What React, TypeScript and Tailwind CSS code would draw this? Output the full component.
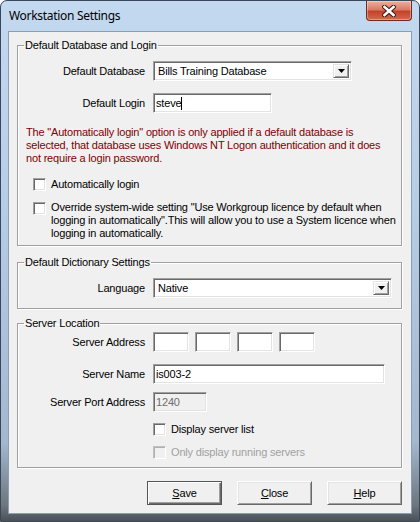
import React from 'react'

const ui = "font-['Liberation_Sans',Arial,sans-serif] text-[11px] leading-[13px] tracking-[-0.18px] text-black"
const sunken = "border border-t-[#a0a0a0] border-l-[#a0a0a0] border-b-white border-r-white shadow-[inset_1px_1px_0_#696969,inset_-1px_-1px_0_#e3e3e3]"

function Combo({ value, width }: { value: string; width: string }) {
    return (
        <div className={`${sunken} ${width} h-[20px] bg-white flex items-stretch p-[2px]`}>
            <span className="flex-1 pl-[2px] flex items-center">{value}</span>
            <span className="w-[16px] bg-[#f0f0f0] flex items-center justify-center border border-t-[#e3e3e3] border-l-[#e3e3e3] border-b-[#696969] border-r-[#696969] shadow-[inset_1px_1px_0_white,inset_-1px_-1px_0_#a0a0a0]">
                <svg width="7" height="4" viewBox="0 0 7 4">
                    <path d="M0 0h7L3.5 4z" fill="#000" />
                </svg>
            </span>
        </div>
    )
}

function TextBox({ value, width, disabled, caret }: { value?: string; width: string; disabled?: boolean; caret?: boolean }) {
    return (
        <div className={`${sunken} ${width} h-[20px] flex items-center pl-[2px] ${disabled ? 'bg-[#f0f0f0] text-[#6d6d6d]' : 'bg-white'}`}>
            <span>{value}</span>
            {caret && <span className="w-[1px] h-[13px] bg-black" />}
        </div>
    )
}

function Check({ disabled }: { disabled?: boolean }) {
    return (
        <span
            className={`block shrink-0 w-[13px] h-[13px] border ${disabled
                ? 'bg-[#f0f0f0] border-t-[#c0c0c0] border-l-[#c0c0c0] border-b-white border-r-white shadow-[inset_1px_1px_0_#b0b0b0]'
                : 'bg-white border-t-[#a0a0a0] border-l-[#a0a0a0] border-b-white border-r-white shadow-[inset_1px_1px_0_#696969,inset_-1px_-1px_0_#e3e3e3]'
                }`}
        />
    )
}

function Row({ label, children, className = '' }: { label: string; children: React.ReactNode; className?: string }) {
    return (
        <div className={`flex items-center gap-[8px] ${className}`}>
            <span className="w-[127px] text-right">{label}</span>
            {children}
        </div>
    )
}

function Group({ title, children, className = '' }: { title: string; children: React.ReactNode; className?: string }) {
    return (
        <fieldset className={`w-[385px] border border-[#a0a0a0] shadow-[inset_1px_1px_0_white,1px_1px_0_white] flex flex-col ${className}`}>
            <legend className="ml-[6px] px-[1px] leading-[13px]">{title}</legend>
            {children}
        </fieldset>
    )
}

function Button({ children, isDefault }: { children: React.ReactNode; isDefault?: boolean }) {
    return (
        <button
            className={`w-[75px] h-[24px] bg-[#f0f0f0] border ${isDefault
                ? 'border-[#555] shadow-[inset_1px_1px_0_white,inset_-1px_-1px_0_#696969,inset_-2px_-2px_0_#a0a0a0]'
                : 'border-t-white border-l-white border-b-[#696969] border-r-[#696969] shadow-[inset_1px_1px_0_#e3e3e3,inset_-1px_-1px_0_#a0a0a0]'
                }`}
        >
            {children}
        </button>
    )
}

export default function App() {
    return (
        <div className={`${ui} w-[420px] h-[522px] flex flex-col rounded-t-[7px] border border-[#39475a] bg-[linear-gradient(to_bottom,#c3d9f0_0%,#b6cde6_40%,#a2b8cf_85%,#6e757d_97%,#4c5158_100%)]`}>
            <div className="h-[30px] flex justify-between items-start">
                <span className="pl-[8px] pt-[8px] font-['Noto_Sans',sans-serif] text-[12px] leading-[14px] tracking-[-0.3px] text-black">
                    Workstation Settings
                </span>
                <div className="mr-[7px] w-[46px] h-[20px] rounded-b-[4px] border border-t-0 border-[#6e2a1e] bg-[linear-gradient(to_bottom,#eab0a2_0%,#db7b65_45%,#c4432a_55%,#d16a52_100%)] shadow-[inset_0_0_0_1px_rgba(255,255,255,0.35)] flex items-center justify-center">
                    <svg width="14" height="12" viewBox="0 0 14 12">
                        <path d="M2.5 2l9 8M11.5 2l-9 8" stroke="#3b1a14" strokeWidth="4.6" strokeLinecap="square" />
                        <path d="M2.5 2l9 8M11.5 2l-9 8" stroke="#fff" strokeWidth="2.6" strokeLinecap="square" />
                    </svg>
                </div>
            </div>

            <div className="mx-[7px] mb-[7px] flex-1 border border-[#8a9fb5] bg-[#f0f0f0] flex flex-col pl-[8px] pt-[7px]">
                <Group title="Default Database and Login" className="pb-[5px]">
                    <Row label="Default Database" className="mt-[9px]">
                        <Combo value="Bills Training Database" width="w-[199px]" />
                    </Row>
                    <Row label="Default Login" className="mt-[12px]">
                        <TextBox value="steve" width="w-[119px]" caret />
                    </Row>
                    <p className="mt-[13px] ml-[8px] text-[#800000] whitespace-nowrap">
                        The "Automatically login" option is only applied if a default database is<br />
                        selected, that database uses Windows NT Logon authentication and it does<br />
                        not require a login password.
                    </p>
                    <label className="mt-[13px] ml-[15px] flex items-center gap-[5px]">
                        <Check />
                        <span>Automatically login</span>
                    </label>
                    <label className="mt-[10px] ml-[15px] flex items-start gap-[5px]">
                        <span className="pt-[1px]"><Check /></span>
                        <span className="whitespace-nowrap">
                            Override system-wide setting "Use Workgroup licence by default when<br />
                            logging in automatically".This will allow you to use a System licence when<br />
                            logging in automatically.
                        </span>
                    </label>
                </Group>

                <Group title="Default Dictionary Settings" className="mt-[10px] pb-[10px]">
                    <Row label="Language" className="mt-[9px]">
                        <Combo value="Native" width="w-[239px]" />
                    </Row>
                </Group>

                <Group title="Server Location" className="mt-[8px] pb-[8px]">
                    <Row label="Server Address" className="mt-[2px]">
                        <div className="flex gap-[6px]">
                            <TextBox width="w-[36px]" />
                            <TextBox width="w-[36px]" />
                            <TextBox width="w-[36px]" />
                            <TextBox width="w-[36px]" />
                        </div>
                    </Row>
                    <Row label="Server Name" className="mt-[12px]">
                        <TextBox value="is003-2" width="w-[232px]" />
                    </Row>
                    <Row label="Server Port Address" className="mt-[8px]">
                        <TextBox value="1240" width="w-[54px]" disabled />
                    </Row>
                    <label className="mt-[11px] ml-[135px] flex items-center gap-[5px]">
                        <Check />
                        <span>Display server list</span>
                    </label>
                    <label className="mt-[10px] ml-[135px] flex items-center gap-[5px] text-[#a0a0a0]">
                        <Check disabled />
                        <span>Only display running servers</span>
                    </label>
                </Group>

                <div className="w-[385px] mt-[13px] flex justify-end gap-[15px]">
                    <Button isDefault><span className="underline">S</span>ave</Button>
                    <Button><span className="underline">C</span>lose</Button>
                    <Button><span className="underline">H</span>elp</Button>
                </div>
            </div>
        </div>
    )
}
